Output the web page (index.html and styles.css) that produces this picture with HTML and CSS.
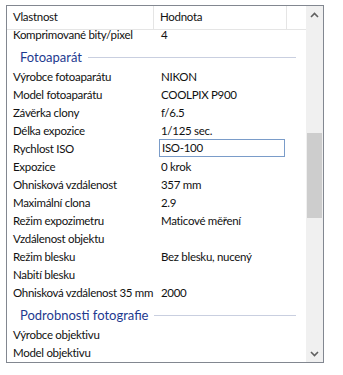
FILE: index.html
```html
<!DOCTYPE html>
<html lang="cs">
<head>
  <meta charset="utf-8">
  <link rel="stylesheet" href="styles.css">
</head>
<body>
  <div class="panel">
    <div class="list">
      <div class="head">
        <div class="hcol name">Vlastnost</div>
        <div class="hcol value">Hodnota</div>
        <div class="hcol rest"></div>
      </div>
      <div class="rows">
        <div class="rows-inner">
          <div class="row"><span class="k">Komprimované bity/pixel</span><span class="v">4</span></div>

          <div class="group"><span class="gtitle">Fotoaparát</span><span class="gline"></span></div>
          <div class="row"><span class="k">Výrobce fotoaparátu</span><span class="v">NIKON</span></div>
          <div class="row"><span class="k">Model fotoaparátu</span><span class="v">COOLPIX P900</span></div>
          <div class="row"><span class="k">Závěrka clony</span><span class="v">f/6.5</span></div>
          <div class="row"><span class="k">Délka expozice</span><span class="v">1/125 sec.</span></div>
          <div class="row"><span class="k">Rychlost ISO</span><span class="v"><span class="edit">ISO-100</span></span></div>
          <div class="row"><span class="k">Expozice</span><span class="v">0 krok</span></div>
          <div class="row"><span class="k">Ohnisková vzdálenost</span><span class="v">357 mm</span></div>
          <div class="row"><span class="k">Maximální clona</span><span class="v">2.9</span></div>
          <div class="row"><span class="k">Režim expozimetru</span><span class="v">Maticové měření</span></div>
          <div class="row"><span class="k">Vzdálenost objektu</span><span class="v"></span></div>
          <div class="row"><span class="k">Režim blesku</span><span class="v">Bez blesku, nucený</span></div>
          <div class="row"><span class="k">Nabití blesku</span><span class="v"></span></div>
          <div class="row"><span class="k">Ohnisková vzdálenost 35 mm</span><span class="v">2000</span></div>

          <div class="group"><span class="gtitle">Podrobnosti fotografie</span><span class="gline"></span></div>
          <div class="row"><span class="k">Výrobce objektivu</span><span class="v"></span></div>
          <div class="row"><span class="k">Model objektivu</span><span class="v"></span></div>
        </div>
      </div>
    </div>
    <div class="scrollbar">
      <div class="arrow">
        <svg width="9" height="6" viewBox="0 0 9 6"><path d="M1 5 L4.5 1.5 L8 5" fill="none" stroke="#606060" stroke-width="1.6"/></svg>
      </div>
      <div class="track">
        <div class="thumb"></div>
      </div>
      <div class="arrow">
        <svg width="9" height="6" viewBox="0 0 9 6"><path d="M1 1 L4.5 4.5 L8 1" fill="none" stroke="#606060" stroke-width="1.6"/></svg>
      </div>
    </div>
  </div>
</body>
</html>
```
FILE: styles.css
```css
* {
  margin: 0;
  padding: 0;
  box-sizing: border-box;
}

body {
  background: #fff;
  padding: 5px 0 0 6px;
  font-family: Lato, "Liberation Sans", sans-serif;
  font-size: 11.5px;
  letter-spacing: -0.3px;
  color: #111;
}

.panel {
  width: 318px;
  height: 358px;
  border: 1px solid #828790;
  display: flex;
}

.list {
  flex: 1;
  display: flex;
  flex-direction: column;
  overflow: hidden;
}

.head {
  height: 24px;
  display: flex;
  border-bottom: 1px solid #e5e5e5;
}

.hcol {
  line-height: 22px;
  padding-left: 6px;
  border-right: 1px solid #e5e5e5;
}

.hcol.name {
  width: 147px;
}

.hcol.value {
  width: 133px;
}

.hcol.rest {
  flex: 1;
  border-right: none;
}

.rows {
  flex: 1;
  overflow: hidden;
}

.rows-inner {
  margin-top: -5px;
}

.row {
  height: 18px;
  display: flex;
  align-items: center;
}

.k {
  width: 147px;
  padding-left: 6px;
  white-space: nowrap;
}

.v {
  flex: 1;
  padding-left: 7px;
  white-space: nowrap;
  display: flex;
}

.edit {
  display: block;
  width: 126px;
  height: 18px;
  margin-left: -2px;
  padding-left: 2px;
  line-height: 16px;
  border: 1px solid #7a9cc9;
}

.group {
  height: 24px;
  display: flex;
  align-items: center;
  padding: 4px 10px 0 13px;
}

.gtitle {
  font-size: 13px;
  letter-spacing: 0;
  color: #1e3a8f;
  white-space: nowrap;
}

.gline {
  flex: 1;
  height: 1px;
  margin-left: 6px;
  background: #c9cfe0;
}

.scrollbar {
  width: 17px;
  background: #f0f0f0;
  display: flex;
  flex-direction: column;
}

.arrow {
  height: 17px;
  display: flex;
  align-items: center;
  justify-content: center;
}

.track {
  flex: 1;
  padding-top: 110px;
}

.thumb {
  height: 85px;
  margin: 0 1px;
  background: #cdcdcd;
}
```
